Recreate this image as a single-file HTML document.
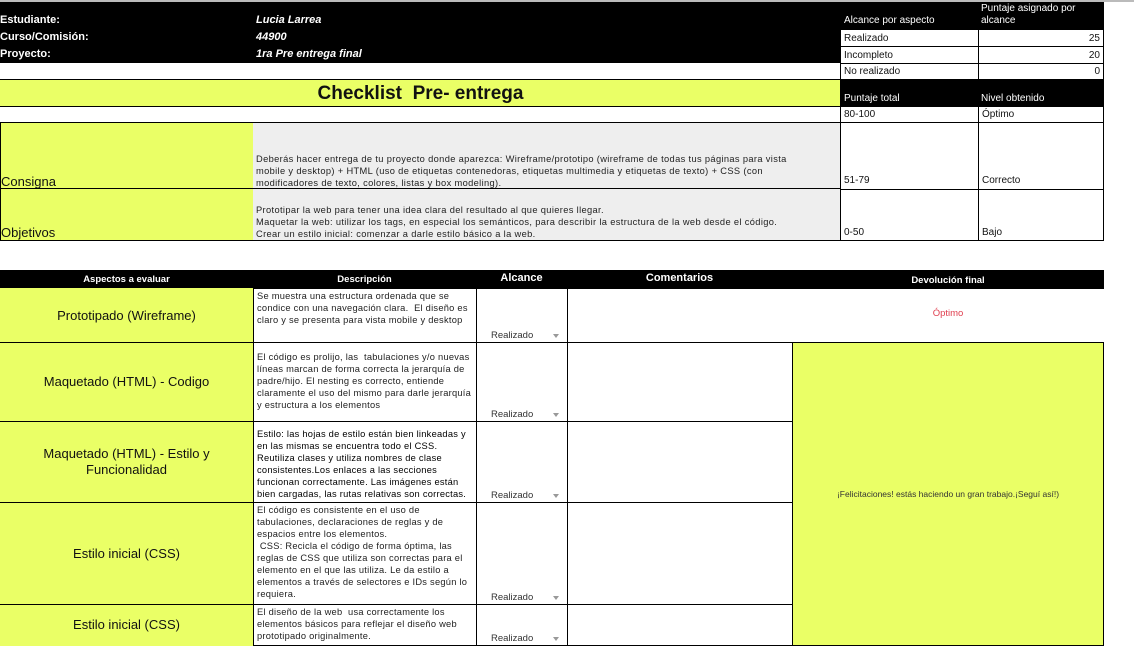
<!DOCTYPE html>
<html><head><meta charset="utf-8"><style>
body{margin:0;width:1134px;height:652px;background:#fff;position:relative;overflow:hidden;font-family:"Liberation Sans",sans-serif;color:#111}
div.a{position:absolute;box-sizing:border-box}
.blk{background:#000;color:#fff}
.y{background:#eaff66}
.b{border:1px solid #000}
.t{font-size:10px;line-height:12px}
.s{font-size:9.5px;line-height:12px;color:#222;padding:0 3px;letter-spacing:0.25px}
.dd{position:absolute;right:8px;bottom:5px;width:0;height:0;border-left:3px solid transparent;border-right:3px solid transparent;border-top:4px solid #999}
.rl{position:absolute;left:15px;bottom:2px;font-size:9.5px;color:#333}
.asp{display:flex;align-items:center;justify-content:center;text-align:center;font-size:13px;line-height:16px}
.hl{position:absolute;height:2px;background:#000}
</style></head><body>
<div class="a" style="left:0;top:0;width:1134px;height:2px;background:#bbb"></div>
<div class="a blk" style="left:0;top:2px;width:1104px;height:61px"></div>
<div class="a" style="left:0;top:12px;color:#fff;font-weight:bold;font-size:11px;line-height:17px">Estudiante:<br>Curso/Comisión:<br>Proyecto:</div>
<div class="a" style="left:256px;top:12px;color:#fff;font-weight:bold;font-style:italic;font-size:11px;line-height:17px">Lucia Larrea<br>44900<br>1ra Pre entrega final</div>
<div class="a" style="left:844px;top:15px;color:#fff;font-size:10px">Alcance por aspecto</div>
<div class="a" style="left:981px;top:3px;color:#fff;font-size:10px;line-height:12px">Puntaje asignado por<br>alcance</div>
<div class="a b t" style="left:840px;top:29px;width:139px;height:18px;padding:3px 3px;background:#fff">Realizado</div>
<div class="a b t" style="left:978px;top:29px;width:126px;height:18px;padding:3px 3px;text-align:right;background:#fff">25</div>
<div class="a b t" style="left:840px;top:46px;width:139px;height:18px;padding:3px 3px;background:#fff">Incompleto</div>
<div class="a b t" style="left:978px;top:46px;width:126px;height:18px;padding:3px 3px;text-align:right;background:#fff">20</div>
<div class="a b t" style="left:840px;top:63px;width:139px;height:17px;padding:2px 3px;background:#fff">No realizado</div>
<div class="a b t" style="left:978px;top:63px;width:126px;height:17px;padding:2px 3px;text-align:right;background:#fff">0</div>
<div class="a" style="left:0;top:63px;width:840px;height:17px;border-bottom:1px solid #000"></div>
<div class="a y" style="left:0;top:79px;width:841px;height:28px;border-top:1px solid #000;border-bottom:1px solid #000;text-align:center;font-size:19px;font-weight:bold;line-height:27px">Checklist&nbsp; Pre- entrega</div>
<div class="a blk t" style="left:840px;top:79px;width:264px;height:28px"><span style="position:absolute;left:4px;bottom:2px">Puntaje total</span><span style="position:absolute;left:141px;bottom:2px">Nivel obtenido</span></div>
<div class="a b t" style="left:840px;top:106px;width:139px;height:17px;padding:2px 3px">80-100</div>
<div class="a b t" style="left:978px;top:106px;width:126px;height:17px;padding:2px 3px">Óptimo</div>
<div class="a y" style="left:0;top:122px;width:254px;height:68px;border-top:1px solid #000;border-right:1px solid #000;border-left:1px solid #000"><span style="position:absolute;left:0;bottom:1px;font-size:13px">Consigna</span></div>
<div class="a" style="left:253px;top:122px;width:588px;height:68px;background:#eee;border-top:1px solid #000"><div class="s" style="position:absolute;bottom:1px;left:0;white-space:nowrap;font-size:9.3px;letter-spacing:0.35px">Deberás hacer entrega de tu proyecto donde aparezca: Wireframe/prototipo (wireframe de todas tus páginas para vista<br>mobile y desktop) + HTML (uso de etiquetas contenedoras, etiquetas multimedia y etiquetas de texto) + CSS (con<br>modificadores de texto, colores, listas y box modeling).</div></div>
<div class="a b t" style="left:840px;top:122px;width:139px;height:68px"><span style="position:absolute;left:3px;bottom:2px">51-79</span></div>
<div class="a b t" style="left:978px;top:122px;width:126px;height:68px"><span style="position:absolute;left:3px;bottom:2px">Correcto</span></div>
<div class="a y" style="left:0;top:189px;width:254px;height:52px;border-right:1px solid #000;border-left:1px solid #000"><span style="position:absolute;left:0;bottom:1px;font-size:13px">Objetivos</span></div>
<div class="a" style="left:253px;top:189px;width:588px;height:52px;background:#eee"><div class="s" style="position:absolute;bottom:1px;left:0;font-size:9.3px;letter-spacing:0.35px">Prototipar la web para tener una idea clara del resultado al que quieres llegar.<br>Maquetar la web: utilizar los tags, en especial los semánticos, para describir la estructura de la web desde el código.<br>Crear un estilo inicial: comenzar a darle estilo básico a la web.</div></div>
<div class="a b t" style="left:840px;top:189px;width:139px;height:52px"><span style="position:absolute;left:3px;bottom:1px">0-50</span></div>
<div class="a b t" style="left:978px;top:189px;width:126px;height:52px"><span style="position:absolute;left:3px;bottom:1px">Bajo</span></div>
<div class="hl" style="left:0;top:188px;width:841px;height:1px"></div>
<div class="hl" style="left:0;top:240px;width:841px;height:1px"></div>

<div class="a blk" style="left:0;top:270px;width:1104px;height:19px"></div>
<div class="a" style="left:0;top:274px;width:253px;text-align:center;color:#fff;font-weight:bold;font-size:9.5px">Aspectos a evaluar</div>
<div class="a" style="left:253px;top:274px;width:223px;text-align:center;color:#fff;font-weight:bold;font-size:9.5px">Descripción</div>
<div class="a" style="left:476px;top:272px;width:91px;text-align:center;color:#fff;font-weight:bold;font-size:11px">Alcance</div>
<div class="a" style="left:567px;top:272px;width:225px;text-align:center;color:#fff;font-weight:bold;font-size:11px">Comentarios</div>
<div class="a" style="left:792px;top:275px;width:312px;text-align:center;color:#fff;font-weight:bold;font-size:9.5px">Devolución final</div>

<div class="a y asp" style="left:0;top:288px;width:254px;height:55px;border-right:1px solid #000">Prototipado (Wireframe)</div>
<div class="a s" style="left:253px;top:288px;width:224px;height:55px;border-left:1px solid #000;border-right:1px solid #000;font-size:9.3px;padding-top:2px">Se muestra una estructura ordenada que se condice con una navegación clara.&nbsp; El diseño es claro y se presenta para vista mobile y desktop</div>
<div class="a" style="left:476px;top:288px;width:92px;height:55px;border-right:1px solid #000"><span class="rl">Realizado</span><span class="dd"></span></div>
<div class="a" style="left:567px;top:288px;width:537px;height:55px;text-align:center;padding-left:225px;padding-top:20px;color:#e04050;font-size:9.5px">Óptimo</div>

<div class="a y asp" style="left:0;top:342px;width:254px;height:80px;border-right:1px solid #000">Maquetado (HTML) - Codigo</div>
<div class="a s" style="left:253px;top:342px;width:224px;height:80px;border-left:1px solid #000;border-right:1px solid #000;font-size:9.3px;padding-top:9px">El código es prolijo, las&nbsp; tabulaciones y/o nuevas líneas marcan de forma correcta la jerarquía de padre/hijo. El nesting es correcto, entiende claramente el uso del mismo para darle jerarquía y estructura a los elementos</div>
<div class="a" style="left:476px;top:342px;width:92px;height:80px;border-right:1px solid #000"><span class="rl">Realizado</span><span class="dd"></span></div>

<div class="a y asp" style="left:0;top:421px;width:254px;height:82px;border-right:1px solid #000">Maquetado (HTML) - Estilo y<br>Funcionalidad</div>
<div class="a s" style="left:253px;top:421px;width:224px;height:82px;border-left:1px solid #000;border-right:1px solid #000;font-size:9.3px;color:#000;padding-top:7px">Estilo: las hojas de estilo están bien linkeadas y en las mismas se encuentra todo el CSS. Reutiliza clases y utiliza nombres de clase consistentes.Los enlaces a las secciones funcionan correctamente. Las imágenes están bien cargadas, las rutas relativas son correctas.</div>
<div class="a" style="left:476px;top:421px;width:92px;height:82px;border-right:1px solid #000"><span class="rl">Realizado</span><span class="dd"></span></div>

<div class="a y asp" style="left:0;top:502px;width:254px;height:103px;border-right:1px solid #000">Estilo inicial (CSS)</div>
<div class="a s" style="left:253px;top:502px;width:224px;height:103px;border-left:1px solid #000;border-right:1px solid #000;font-size:9.3px;padding-top:2px">El código es consistente en el uso de tabulaciones, declaraciones de reglas y de espacios entre los elementos.<br>&nbsp;CSS: Recicla el código de forma óptima, las reglas de CSS que utiliza son correctas para el elemento en el que las utiliza. Le da estilo a elementos a través de selectores e IDs según lo requiera.</div>
<div class="a" style="left:476px;top:502px;width:92px;height:103px;border-right:1px solid #000"><span class="rl">Realizado</span><span class="dd"></span></div>

<div class="a y asp" style="left:0;top:604px;width:254px;height:42px;border-right:1px solid #000">Estilo inicial (CSS)</div>
<div class="a s" style="left:253px;top:604px;width:224px;height:42px;border-left:1px solid #000;border-right:1px solid #000;font-size:9.3px;padding-top:2px">El diseño de la web&nbsp; usa correctamente los elementos básicos para reflejar el diseño web prototipado originalmente.</div>
<div class="a" style="left:476px;top:604px;width:92px;height:42px;border-right:1px solid #000"><span class="rl">Realizado</span><span class="dd"></span></div>

<div class="a y" style="left:792px;top:342px;width:312px;height:304px;border:1px solid #000;display:flex;align-items:center;justify-content:center;font-size:8.5px;color:#333">¡Felicitaciones! estás haciendo un gran trabajo.¡Seguí así!)</div>

<div class="hl" style="left:0;top:342px;width:1104px;height:1px"></div>
<div class="hl" style="left:0;top:421px;width:792px;height:1px"></div>
<div class="hl" style="left:0;top:502px;width:792px;height:1px"></div>
<div class="hl" style="left:0;top:604px;width:792px;height:1px"></div>
<div class="hl" style="left:253px;top:645px;width:851px;height:1px"></div>
</body></html>
